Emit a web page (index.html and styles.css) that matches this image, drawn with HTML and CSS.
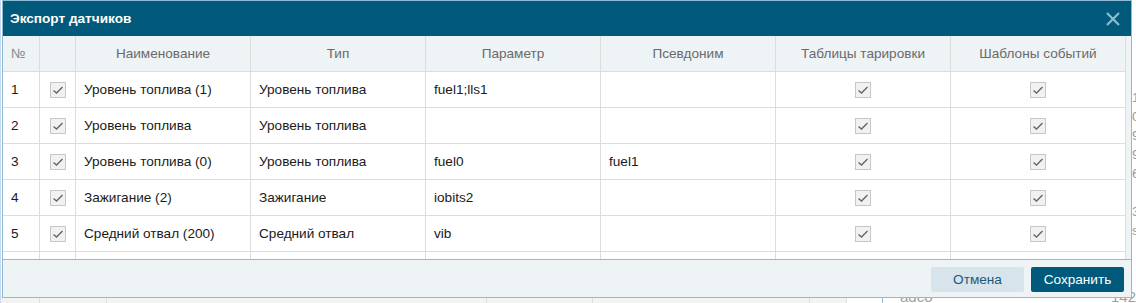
FILE: index.html
```html
<!DOCTYPE html>
<html lang="ru">
<head>
    <meta charset="UTF-8">
    <title>Экспорт датчиков</title>
    <link rel="stylesheet" href="styles.css">
</head>
<body>
    <!-- page behind the modal -->
    <div class="page">
        <div class="bg-area">
            <div class="bg-col">
                <span>1</span><span>0</span><span>9</span><span>9</span><span>6</span><span>&nbsp;</span><span>3</span><span>s</span>
            </div>
        </div>
        <div class="bg-row">
            <div class="bg-cell w40"></div>
            <div class="bg-cell w67"></div>
            <div class="bg-cell w380"></div>
            <div class="bg-cell w106"></div>
            <div class="bg-cell w217"></div>
            <div class="bg-cell w37"></div>
            <div class="bg-cell w36 bg-cell-blue"></div>
            <div class="bg-cell bg-text">adco</div>
            <div class="bg-cell bg-num">142</div>
        </div>
    </div>

    <div class="dialog">
        <div class="dialog-title">
            <span>Экспорт датчиков</span>
            <svg class="close" width="14" height="14" viewBox="0 0 14 14">
                <path d="M1 1 L13 13 M13 1 L1 13" stroke="#8fbad0" stroke-width="2.2" fill="none"/>
            </svg>
        </div>

        <div class="dialog-body">
            <div class="grid">
                <div class="row head">
                    <div class="cell">№</div>
                    <div class="cell"></div>
                    <div class="cell center">Наименование</div>
                    <div class="cell center">Тип</div>
                    <div class="cell center">Параметр</div>
                    <div class="cell center">Псевдоним</div>
                    <div class="cell center">Таблицы тарировки</div>
                    <div class="cell center">Шаблоны событий</div>
                </div>

                <div class="row">
                    <div class="cell">1</div>
                    <div class="cell center"><span class="check"></span></div>
                    <div class="cell">Уровень топлива (1)</div>
                    <div class="cell">Уровень топлива</div>
                    <div class="cell">fuel1;lls1</div>
                    <div class="cell"></div>
                    <div class="cell center"><span class="check"></span></div>
                    <div class="cell center"><span class="check"></span></div>
                </div>

                <div class="row">
                    <div class="cell">2</div>
                    <div class="cell center"><span class="check"></span></div>
                    <div class="cell">Уровень топлива</div>
                    <div class="cell">Уровень топлива</div>
                    <div class="cell"></div>
                    <div class="cell"></div>
                    <div class="cell center"><span class="check"></span></div>
                    <div class="cell center"><span class="check"></span></div>
                </div>

                <div class="row">
                    <div class="cell">3</div>
                    <div class="cell center"><span class="check"></span></div>
                    <div class="cell">Уровень топлива (0)</div>
                    <div class="cell">Уровень топлива</div>
                    <div class="cell">fuel0</div>
                    <div class="cell">fuel1</div>
                    <div class="cell center"><span class="check"></span></div>
                    <div class="cell center"><span class="check"></span></div>
                </div>

                <div class="row">
                    <div class="cell">4</div>
                    <div class="cell center"><span class="check"></span></div>
                    <div class="cell">Зажигание (2)</div>
                    <div class="cell">Зажигание</div>
                    <div class="cell">iobits2</div>
                    <div class="cell"></div>
                    <div class="cell center"><span class="check"></span></div>
                    <div class="cell center"><span class="check"></span></div>
                </div>

                <div class="row">
                    <div class="cell">5</div>
                    <div class="cell center"><span class="check"></span></div>
                    <div class="cell">Средний отвал (200)</div>
                    <div class="cell">Средний отвал</div>
                    <div class="cell">vib</div>
                    <div class="cell"></div>
                    <div class="cell center"><span class="check"></span></div>
                    <div class="cell center"><span class="check"></span></div>
                </div>

                <div class="row filler">
                    <div class="cell"></div><div class="cell"></div><div class="cell"></div><div class="cell"></div>
                    <div class="cell"></div><div class="cell"></div><div class="cell"></div><div class="cell"></div>
                </div>
            </div>
        </div>

        <div class="dialog-footer">
            <button class="btn btn-cancel">Отмена</button>
            <button class="btn btn-save">Сохранить</button>
        </div>
    </div>
</body>
</html>
```

FILE: styles.css
```css
:root {
    --title: #015a7c;
    --soft: #eef3f6;
    --line: #dddddd;
    --edge: #8dbbd6;
    --text: #1a1a1a;
    --muted: #6a6a6a;
}

body {
    margin: 0;
    font-family: 'Liberation Sans', Arial, sans-serif;
    font-size: 13.6px;
    color: var(--text);
    background: #ffffff;
    overflow: hidden;
}

/* background page */

.page {
    width: 1136px;
    height: 303px;
    display: flex;
    flex-direction: column;
    border-left: 1px solid #c9d9ef;
    box-sizing: border-box;
}

.bg-area {
    height: 296px;
    display: flex;
    justify-content: flex-end;
}

.bg-col {
    width: 4px;
    padding-top: 88px;
    overflow: hidden;
    display: flex;
    flex-direction: column;
    color: #9a9a9a;
    line-height: 19px;
}

.bg-row {
    flex: 1;
    display: flex;
    background: #f3f3f3;
    color: #a0a0a0;
}

.bg-cell {
    border-right: 1px solid #dedede;
    box-sizing: border-box;
}

.w40 { width: 39px; }
.w67 { width: 67px; }
.w380 { width: 380px; }
.w106 { width: 106px; }
.w217 { width: 217px; }
.w37 { width: 37px; }
.w36 { width: 36px; }

.bg-cell-blue {
    border-right-color: #9cc0d8;
    background: #ffffff;
}

.bg-text {
    width: 200px;
    padding: 0 0 0 17px;
    line-height: 12px;
    font-size: 15px;
    margin-top: -4px;
    border: none;
    background: #ffffff;
}

.bg-num {
    flex: 1;
    text-align: right;
    line-height: 12px;
    font-size: 15px;
    margin-top: -4px;
    border: none;
    background: #ffffff;
}

/* modal */

.dialog {
    position: absolute;
    left: 2px;
    top: 0;
    width: 1130px;
    border: 1px solid var(--edge);
    background: var(--soft);
    box-sizing: border-box;
}

.dialog-title {
    height: 35px;
    background: var(--title);
    color: #ffffff;
    font-weight: 700;
    padding: 0 11px 0 7px;
    display: flex;
    align-items: center;
    justify-content: space-between;
}

.close {
    margin-top: 1px;
}

.dialog-body {
    height: 223px;
    background: var(--soft);
}

.grid {
    width: 1123px;
    background: #ffffff;
}

.row {
    display: grid;
    grid-template-columns: 37px 36px repeat(6, 175px);
    height: 36px;
}

.cell {
    border-right: 1px solid var(--line);
    border-bottom: 1px solid var(--line);
    box-sizing: border-box;
    padding: 0 8px;
    display: flex;
    align-items: center;
    white-space: nowrap;
    overflow: hidden;
}

.center {
    justify-content: center;
}

.head {
    background: var(--soft);
    color: var(--muted);
}

.head .cell:first-child {
    color: #8a8a8a;
}

.filler {
    height: 7px;
}

.filler .cell {
    border-bottom: none;
}

.check {
    width: 16px;
    height: 16px;
    box-sizing: border-box;
    border: 1px solid #c6c6c6;
    background: #f1f1f1 url("data:image/svg+xml,%3Csvg xmlns='http://www.w3.org/2000/svg' width='14' height='14' viewBox='0 0 14 14'%3E%3Cpath d='M2.5 7.5 L5.5 10 L11.5 4' stroke='%23666' stroke-width='1.4' fill='none'/%3E%3C/svg%3E") center no-repeat;
}

.dialog-footer {
    height: 36px;
    border-top: 1px solid var(--edge);
    display: flex;
    align-items: center;
    justify-content: flex-end;
    gap: 7px;
    padding-right: 7px;
    padding-top: 1px;
    box-sizing: content-box;
}

.btn {
    width: 93px;
    height: 25px;
    border: none;
    border-radius: 2px;
    font-family: 'Liberation Sans', Arial, sans-serif;
    font-size: 13.6px;
    cursor: pointer;
}

.btn-cancel {
    background: #d7e4eb;
    color: #1c5878;
}

.btn-save {
    background: var(--title);
    color: #ffffff;
}
```
